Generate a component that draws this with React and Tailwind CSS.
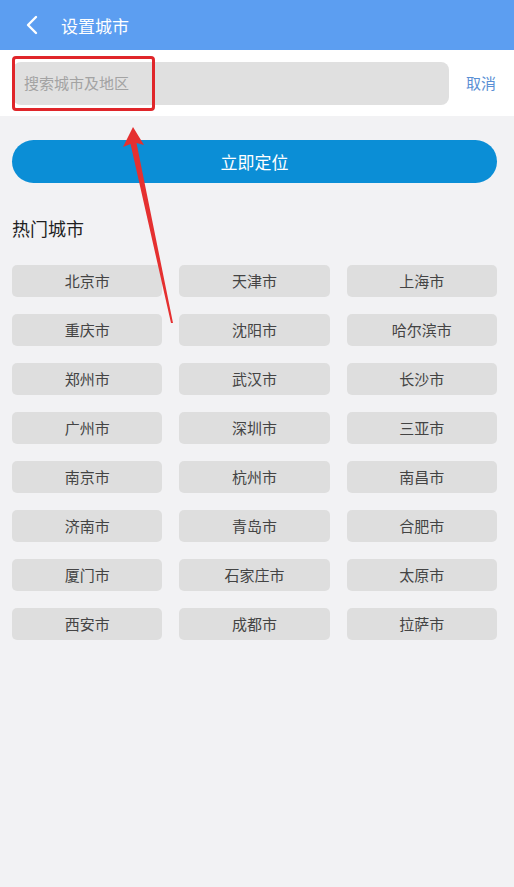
import React from 'react';

const cities = [
  '北京市', '天津市', '上海市',
  '重庆市', '沈阳市', '哈尔滨市',
  '郑州市', '武汉市', '长沙市',
  '广州市', '深圳市', '三亚市',
  '南京市', '杭州市', '南昌市',
  '济南市', '青岛市', '合肥市',
  '厦门市', '石家庄市', '太原市',
  '西安市', '成都市', '拉萨市',
];

const font = { fontFamily: '"Noto Sans CJK SC", "Noto Sans", sans-serif' };

const BackIcon = () => (
  <svg width="14" height="20" viewBox="0 0 14 20" fill="none">
    <path d="M11 2 L3 10 L11 18" stroke="white" strokeWidth="2.4" strokeLinecap="round" strokeLinejoin="round" />
  </svg>
);

const App = () => {
  return (
    <div className="relative w-[514px] h-[887px] bg-[#f2f2f4] overflow-hidden" style={font}>
      {/* Top bar */}
      <div className="h-[50px] bg-[#5c9ef1] flex items-center">
        <div className="w-[61px] flex items-center pl-[25px]">
          <BackIcon />
        </div>
        <span className="text-white text-[17px] leading-none">设置城市</span>
      </div>

      {/* Search */}
      <div className="h-[66px] bg-white flex items-center pl-[13px] pr-[18px]">
        <div className="flex-1 h-[43px] rounded-[8px] bg-[#e0e0e0] flex items-center pl-[11px]">
          <span className="text-[15px] text-[#a3a3a3]">搜索城市及地区</span>
        </div>
        <span className="ml-[17px] text-[15px] text-[#5a8fd4]">取消</span>
      </div>

      <div className="px-[12px] pt-[24px]">
        <button className="w-[485px] h-[43px] rounded-full bg-[#0b8ed6] text-white text-[17px] flex items-center justify-center">
          立即定位
        </button>

        <div className="mt-[36px] text-[18px] text-[#1f1f1f] leading-none">热门城市</div>

        <div className="mt-[28px] grid grid-cols-3 gap-x-[17px] gap-y-[17px] w-[485px]">
          {cities.map(city => (
            <div
              key={city}
              className="h-[32px] rounded-[5px] bg-[#dedede] flex items-center justify-center text-[15px] text-[#444]"
            >
              {city}
            </div>
          ))}
        </div>
      </div>

      {/* Annotation: box around the placeholder and pointing arrow */}
      <div className="absolute left-[12px] top-[56px] w-[143px] h-[55px] border-[3px] border-[#e0262a] rounded-[4px]" />
      <svg className="absolute left-0 top-0" width="514" height="887" viewBox="0 0 514 887">
        <polygon points="133,127 123,147 130.5,144 171,323 173,323 136.5,143 144,145" fill="#e53030" />
      </svg>
    </div>
  );
};

export default App;
